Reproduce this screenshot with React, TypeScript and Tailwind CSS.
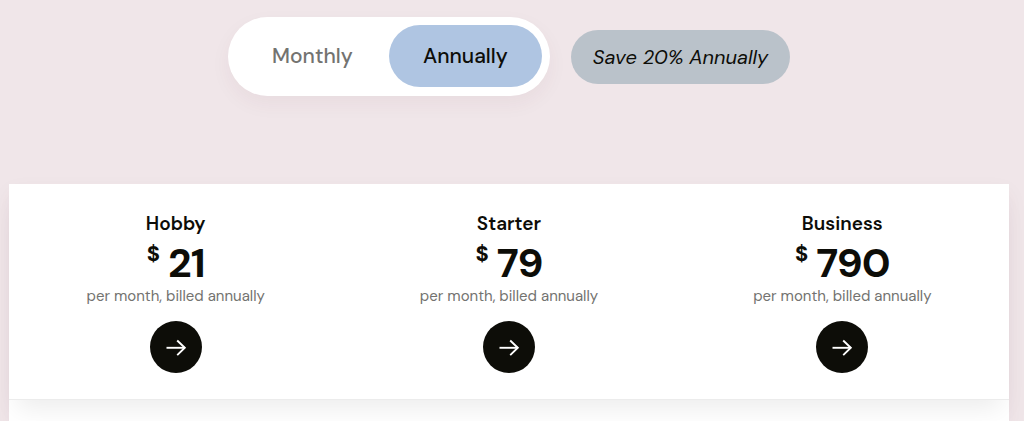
import React, { useState } from 'react';

type Billing = 'monthly' | 'annually';

interface Plan {
  name: string;
  monthly: number;
  annually: number;
}

const plans: Plan[] = [
  { name: 'Hobby', monthly: 26, annually: 21 },
  { name: 'Starter', monthly: 99, annually: 79 },
  { name: 'Business', monthly: 990, annually: 790 },
];

const ArrowIcon: React.FC = () => (
  <svg className="w-6 h-6" viewBox="0 0 24 24" fill="none" stroke="currentColor" strokeWidth="1.9" aria-hidden="true">
    <path d="M2.5 12.8H21" />
    <path d="M13.2 5.5L20.8 12.8L13.2 20.1" />
  </svg>
);

const BillingToggle: React.FC<{ billing: Billing; onChange: (billing: Billing) => void }> = ({ billing, onChange }) => {
  const active = 'bg-[#afc5e2] text-[#0d0d08]';
  const inactive = 'text-[#737370]';

  return (
    <div className="grid grid-cols-2 px-2 pt-2 pb-[9px] bg-white rounded-full shadow-[0_8px_20px_rgba(90,40,60,0.05)]">
      <button
        type="button"
        aria-pressed={billing === 'monthly'}
        onClick={() => onChange('monthly')}
        className={`w-[153px] h-[62px] pt-[2px] rounded-full text-[21px] font-medium ${billing === 'monthly' ? active : inactive}`}
      >
        Monthly
      </button>
      <button
        type="button"
        aria-pressed={billing === 'annually'}
        onClick={() => onChange('annually')}
        className={`w-[153px] h-[62px] pt-[2px] rounded-full text-[21px] font-medium ${billing === 'annually' ? active : inactive}`}
      >
        Annually
      </button>
    </div>
  );
};

const PlanColumn: React.FC<{ plan: Plan; billing: Billing }> = ({ plan, billing }) => (
  <section className="flex flex-col items-center">
    <h2 className="text-[19px] leading-6 font-semibold">{plan.name}</h2>
    <div className="flex items-start gap-2 h-12 font-bold">
      <span className="text-[22px] leading-9">$</span>
      <span className="text-[41px] leading-[54px] tracking-tight">{plan[billing]}</span>
    </div>
    <p className="text-[15px] leading-[25px] text-[#737370]">per month, billed {billing}</p>
    <button
      type="button"
      aria-label={`Choose ${plan.name}`}
      className="flex items-center justify-center w-13 h-13 mt-3 bg-[#0d0d08] text-white rounded-full"
    >
      <ArrowIcon />
    </button>
  </section>
);

export default function App() {
  const [billing, setBilling] = useState<Billing>('annually');

  return (
    <main className="flex flex-col min-h-screen pt-[17px] pl-[9px] pr-[15px] bg-[#f0e6e9] text-[#0d0d08] font-['DM_Sans','Inter',sans-serif]">
      <div className="flex items-center justify-center gap-[21px]">
        <BillingToggle billing={billing} onChange={setBilling} />
        <span className="px-[22px] py-3 bg-[#bac2ca] rounded-full text-xl leading-[30px] italic">Save 20% Annually</span>
      </div>

      <div className="flex flex-col grow mt-22 bg-white shadow-[0_8px_20px_rgba(90,40,60,0.05)]">
        <div className="grid grid-cols-3 pt-7 pb-[26px] bg-white border-b border-[#ececec] shadow-[0_16px_24px_-8px_rgba(0,0,0,0.08)]">
          {plans.map((plan) => (
            <PlanColumn key={plan.name} plan={plan} billing={billing} />
          ))}
        </div>
      </div>
    </main>
  );
}
